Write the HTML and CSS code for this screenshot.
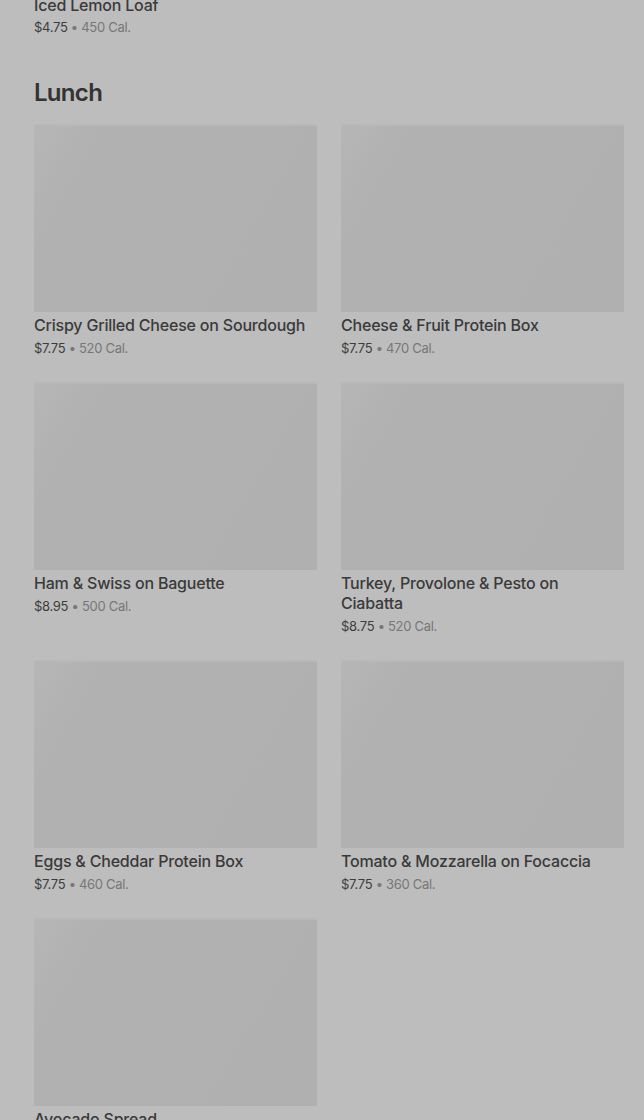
FILE: index.html
```html
<!DOCTYPE html>
<html lang="en">
<head>
  <meta charset="UTF-8">
  <meta name="viewport" content="width=device-width, initial-scale=1.0">
  <title>Menu - Lunch</title>
  <link rel="stylesheet" href="styles.css">
</head>
<body>
  <main class="menu">
    <div class="tail">
      <div class="item-info">
        <div class="item-name">Iced Lemon Loaf</div>
        <div class="item-meta"><span class="price">$4.75</span> • 450 Cal.</div>
      </div>
    </div>

    <section class="category">
      <h2>Lunch</h2>
      <div class="grid">
        <div class="item">
          <div class="thumb"></div>
          <div class="item-name">Crispy Grilled Cheese on Sourdough</div>
          <div class="item-meta"><span class="price">$7.75</span> • 520 Cal.</div>
        </div>
        <div class="item">
          <div class="thumb"></div>
          <div class="item-name">Cheese &amp; Fruit Protein Box</div>
          <div class="item-meta"><span class="price">$7.75</span> • 470 Cal.</div>
        </div>
        <div class="item">
          <div class="thumb"></div>
          <div class="item-name">Ham &amp; Swiss on Baguette</div>
          <div class="item-meta"><span class="price">$8.95</span> • 500 Cal.</div>
        </div>
        <div class="item">
          <div class="thumb"></div>
          <div class="item-name">Turkey, Provolone &amp; Pesto on Ciabatta</div>
          <div class="item-meta"><span class="price">$8.75</span> • 520 Cal.</div>
        </div>
        <div class="item">
          <div class="thumb"></div>
          <div class="item-name">Eggs &amp; Cheddar Protein Box</div>
          <div class="item-meta"><span class="price">$7.75</span> • 460 Cal.</div>
        </div>
        <div class="item">
          <div class="thumb"></div>
          <div class="item-name">Tomato &amp; Mozzarella on Focaccia</div>
          <div class="item-meta"><span class="price">$7.75</span> • 360 Cal.</div>
        </div>
        <div class="item">
          <div class="thumb"></div>
          <div class="item-name">Avocado Spread</div>
          <div class="item-meta"><span class="price">$1.25</span> • 90 Cal.</div>
        </div>
      </div>
    </section>
  </main>
</body>
</html>
```

FILE: styles.css
```css
body {
  margin: 0;
  font-family: Inter, Roboto, 'Liberation Sans', sans-serif;
  background-color: #bdbdbd;
  color: #3a3a3a;
}
.menu {
  padding: 0 20px 40px 34px;
}
.tail {
  margin-top: -8px;
}
.tail .item-meta {
  margin-top: 3px;
}
.category h2 {
  margin: 42px 0 16px;
  font-size: 24px;
  line-height: 30px;
  font-weight: 600;
  letter-spacing: -0.7px;
  color: #333;
}
.grid {
  display: grid;
  grid-template-columns: 1fr 1fr;
  column-gap: 24px;
  row-gap: 25px;
  align-items: start;
}
.thumb {
  height: 188px;
  background: linear-gradient(120deg, #b6b6b6 0%, #b1b1b1 18%, #b0b0b0 100%);
  border-top: 2px solid #b8b8b8;
  box-sizing: border-box;
}
.item-name {
  margin-top: 3px;
  font-size: 16px;
  line-height: 20px;
  font-weight: 500;
  letter-spacing: -0.2px;
  color: #3a3a3a;
}
.item-meta {
  margin-top: 4px;
  font-size: 13px;
  line-height: 18px;
  letter-spacing: -0.3px;
  color: #777;
}
.price {
  color: #3d3d3d;
}
```
